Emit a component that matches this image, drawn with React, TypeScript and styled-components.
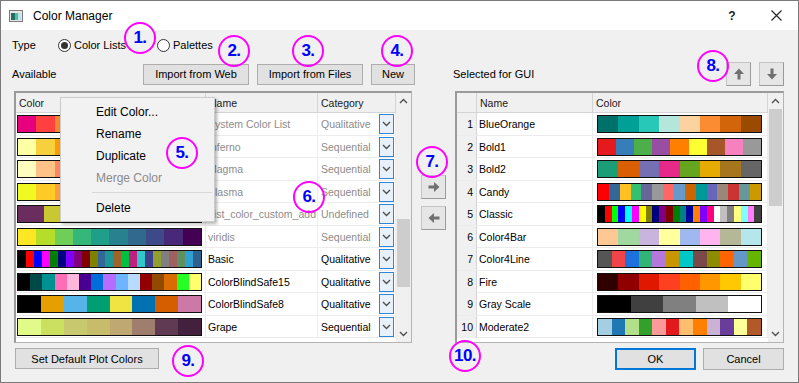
import React from 'react';
import styled, { createGlobalStyle } from 'styled-components';

const GlobalStyle = createGlobalStyle`
  html, body { margin: 0; padding: 0; background: #ffffff; }
  body {
    font-family: "Liberation Sans", Arial, sans-serif;
    font-size: 11px;
    color: #000;
  }
  * { box-sizing: border-box; }
`;

const available = [
  { name: 'System Color List', cat: 'Qualitative', sys: true, colors: ['#e6007e', '#ff4040', '#f08a2c', '#f5c400', '#8cc63f', '#00a651', '#00aeef', '#2e3192', '#662d91', '#9e005d'] },
  { name: 'Inferno', cat: 'Sequential', sys: true, colors: ['#fcffa4', '#f7d13d', '#fb9b06', '#ed6925', '#cf4446', '#a52c60', '#781c6d', '#4a0c6b', '#1b0c41', '#000004'] },
  { name: 'Magma', cat: 'Sequential', sys: true, colors: ['#fcfdbf', '#fec287', '#fb8761', '#e55064', '#b73779', '#8c2981', '#5f187f', '#311165', '#0b0924', '#000004'] },
  { name: 'Plasma', cat: 'Sequential', sys: true, colors: ['#f0f921', '#fdca26', '#fb9f3a', '#ed7953', '#d8576b', '#bd3786', '#9c179e', '#7201a8', '#46039f', '#0d0887'] },
  { name: 'List_color_custom_add', cat: 'Undefined', sys: true, colors: ['#6b2c5e', '#c9c832', '#1e8a3c', '#0a1e8c', '#000080', '#1e5aa0', '#00e682'] },
  { name: 'viridis', cat: 'Sequential', sys: true, colors: ['#fde725', '#b5de2b', '#6ece58', '#35b779', '#1f9e89', '#26828e', '#31688e', '#3e4989', '#482878', '#440154'] },
  { name: 'Basic', cat: 'Qualitative', sys: false, colors: ['#000000', '#ff0000', '#0000ff', '#ff00ff', '#008000', '#000080', '#8000ff', '#800080', '#800000', '#808000', '#336699', '#1e9696', '#a0642a', '#00c040', '#c02080', '#30c8c8', '#404090', '#90a030', '#808080', '#a06060', '#609060', '#30a0d0', '#306090'] },
  { name: 'ColorBlindSafe15', cat: 'Qualitative', sys: false, colors: ['#000000', '#004949', '#009292', '#ff6db6', '#ffb6db', '#490092', '#006ddb', '#b66dff', '#6db6ff', '#b6dbff', '#920000', '#924900', '#db6d00', '#24ff24', '#ffff6d'] },
  { name: 'ColorBlindSafe8', cat: 'Qualitative', sys: false, colors: ['#000000', '#e69f00', '#56b4e9', '#009e73', '#f0e442', '#0072b2', '#d55e00', '#cc79a7'] },
  { name: 'Grape', cat: 'Sequential', sys: false, colors: ['#e2fa8a', '#cce060', '#c8c870', '#c6bc6a', '#c0a872', '#a07e6e', '#603a52', '#42203e'] },
];

const selected = [
  { name: 'BlueOrange', colors: ['#00706a', '#00a096', '#28c8b8', '#b4e6dc', '#fcd2a0', '#fc8c32', '#d2640a', '#9b4b00'] },
  { name: 'Bold1', colors: ['#e41a1c', '#377eb8', '#4daf4a', '#984ea3', '#ff7f00', '#ffff33', '#a65628', '#f781bf', '#999999'] },
  { name: 'Bold2', colors: ['#1b9e77', '#d95f02', '#7570b3', '#e7298a', '#66a61e', '#e6ab02', '#a6761d', '#666666'] },
  { name: 'Candy', colors: ['#ff0000', '#336699', '#ffc020', '#33c070', '#666699', '#999999', '#ff6666', '#6699cc', '#cc6600', '#009999', '#6666bb', '#998877', '#cc3333', '#669999', '#cc9900'] },
  { name: 'Classic', colors: ['#000000', '#ff0000', '#00ff00', '#0000ff', '#00ffff', '#ff00ff', '#ffff00', '#808000', '#000080', '#800080', '#800000', '#008000', '#008080', '#0000a0', '#ff8000', '#8000ff', '#ff0080', '#ffffff', '#c0c0c0', '#808080', '#ffff80', '#80ffff', '#ff80ff', '#404040'] },
  { name: 'Color4Bar', colors: ['#fdc893', '#a0d8a0', '#c8b4dc', '#ffff9e', '#a0b8f0', '#ffb4f0', '#b4b896', '#b4e6ec'] },
  { name: 'Color4Line', colors: ['#555555', '#f04448', '#1e70dc', '#32b478', '#b478dc', '#c89600', '#00c8c8', '#7a4a4a', '#8c8c00', '#ff6400', '#6496c8', '#64b400'] },
  { name: 'Fire', colors: ['#300000', '#900000', '#e01800', '#ff4020', '#ff6000', '#ff9800', '#ffc800', '#ffff6e'] },
  { name: 'Gray Scale', colors: ['#000000', '#404040', '#808080', '#c0c0c0', '#ffffff'] },
  { name: 'Moderate2', colors: ['#a6cee3', '#1f78b4', '#b2df8a', '#33a02c', '#fb9a99', '#e31a1c', '#fdbf6f', '#ff7f00', '#cab2d6', '#6a3d9a', '#ffff99', '#b15928'] },
];

const marks = [
  { n: '1.', x: 140, y: 38 },
  { n: '2.', x: 234, y: 51 },
  { n: '3.', x: 308, y: 51 },
  { n: '4.', x: 397, y: 51 },
  { n: '5.', x: 182, y: 153 },
  { n: '6.', x: 309, y: 197 },
  { n: '7.', x: 432, y: 162 },
  { n: '8.', x: 713, y: 66 },
  { n: '9.', x: 188, y: 361 },
  { n: '10.', x: 465, y: 356 },
];

const Chevron = ({ up }: { up?: boolean }) => (
  <svg width="9" height="6" viewBox="0 0 9 6">
    <polyline
      points={up ? '1,5 4.5,1.5 8,5' : '1,1 4.5,4.5 8,1'}
      fill="none"
      stroke="#505050"
      strokeWidth="1.4"
    />
  </svg>
);

const Arrow = ({ dir }: { dir: 'up' | 'down' | 'left' | 'right' }) => {
  const rot = { up: 0, right: 90, down: 180, left: 270 }[dir];
  return (
    <svg width="14" height="14" viewBox="0 0 14 14">
      <path d="M7 1.5 L2 7 H5.5 V12.5 H8.5 V7 H12 Z" fill="#707070" transform={`rotate(${rot} 7 7)`} />
    </svg>
  );
};

const App = () => {
  return (
    <>
      <GlobalStyle />
      <Window>
        <TitleBar>
          <svg width="14" height="12" viewBox="0 0 14 12">
            <rect x="0.5" y="0.5" width="13" height="11" fill="#e6e6e6" stroke="#7a7a7a" />
            <rect x="2" y="3" width="4" height="7" fill="#1f6f5f" />
            <rect x="6" y="3" width="3" height="7" fill="#5fb8a0" />
            <rect x="9" y="3" width="3" height="7" fill="#bfe0f0" />
          </svg>
          <TitleText>Color Manager</TitleText>
          <TitleButton>
            <b>?</b>
          </TitleButton>
          <TitleButton>
            <svg width="11" height="11" viewBox="0 0 11 11">
              <path d="M0.5 0.5 L10.5 10.5 M10.5 0.5 L0.5 10.5" stroke="#222" strokeWidth="1.1" />
            </svg>
          </TitleButton>
        </TitleBar>

        <Body>
          <TypeRow>
            <Label $w={46}>Type</Label>
            <RadioItem $w={99}>
              <RadioDot $on />
              Color Lists
            </RadioItem>
            <RadioItem>
              <RadioDot />
              Palettes
            </RadioItem>
          </TypeRow>

          <ToolRow>
            <Tools>
              <Label $w={123}>Available</Label>
              <Button $w={106}>Import from Web</Button>
              <Button $w={106}>Import from Files</Button>
              <Button $w={44}>New</Button>
            </Tools>
            <span />
            <Tools>
              <Label $w={0} style={{ flex: 1 }}>Selected for GUI</Label>
              <IconButton>
                <Arrow dir="up" />
              </IconButton>
              <IconButton>
                <Arrow dir="down" />
              </IconButton>
            </Tools>
          </ToolRow>

          <Main>
            <Frame>
              <Grid>
                <AvailRow $head>
                  <HeadCell>Color</HeadCell>
                  <HeadCell>Name</HeadCell>
                  <HeadCell>Category</HeadCell>
                </AvailRow>
                {available.map((row) => (
                  <AvailRow key={row.name}>
                    <SwatchCell>
                      <Swatch>
                        {row.colors.map((c, i) => (
                          <Chip key={i} $c={c} />
                        ))}
                      </Swatch>
                    </SwatchCell>
                    <TextCell $muted={row.sys}>{row.name}</TextCell>
                    <CatCell $muted={row.sys}>
                      {row.cat}
                      <Drop>
                        <Chevron />
                      </Drop>
                    </CatCell>
                  </AvailRow>
                ))}
              </Grid>
              <Scrollbar>
                <ScrollArrow>
                  <Chevron up />
                </ScrollArrow>
                <Track>
                  <Thumb $top={110} $h={68} />
                </Track>
                <ScrollArrow>
                  <Chevron />
                </ScrollArrow>
              </Scrollbar>
            </Frame>

            <Middle>
              <IconButton>
                <Arrow dir="right" />
              </IconButton>
              <IconButton>
                <Arrow dir="left" />
              </IconButton>
            </Middle>

            <Frame>
              <Grid>
                <SelRow $head>
                  <NumCell />
                  <HeadCell>Name</HeadCell>
                  <HeadCell>Color</HeadCell>
                </SelRow>
                {selected.map((row, idx) => (
                  <SelRow key={row.name}>
                    <NumCell>{idx + 1}</NumCell>
                    <TextCell>{row.name}</TextCell>
                    <SwatchCell $right>
                      <Swatch>
                        {row.colors.map((c, i) => (
                          <Chip key={i} $c={c} />
                        ))}
                      </Swatch>
                    </SwatchCell>
                  </SelRow>
                ))}
              </Grid>
              <Scrollbar>
                <ScrollArrow>
                  <Chevron up />
                </ScrollArrow>
                <Track>
                  <Thumb $top={0} $h={97} />
                </Track>
                <ScrollArrow>
                  <Chevron />
                </ScrollArrow>
              </Scrollbar>
            </Frame>
          </Main>

          <BottomRow>
            <Button $w={144}>Set Default Plot Colors</Button>
            <DialogButtons>
              <Button $w={81} $h={22} $focus>
                OK
              </Button>
              <Button $w={81} $h={22}>
                Cancel
              </Button>
            </DialogButtons>
          </BottomRow>
        </Body>

        <Menu>
          <MenuItem>Edit Color...</MenuItem>
          <MenuItem>Rename</MenuItem>
          <MenuItem>Duplicate</MenuItem>
          <MenuItem $disabled>Merge Color</MenuItem>
          <MenuSeparator />
          <MenuItem>Delete</MenuItem>
        </Menu>

        {marks.map((m) => (
          <Mark key={m.n} $x={m.x} $y={m.y}>
            {m.n}
          </Mark>
        ))}
      </Window>
    </>
  );
};

const Window = styled.div`
  position: relative;
  width: 799px;
  height: 383px;
  border: 1px solid #7a7a7a;
  background: #f0f0f0;
  display: flex;
  flex-direction: column;
  overflow: hidden;
`;

const TitleBar = styled.div`
  height: 29px;
  background: #ffffff;
  display: flex;
  align-items: center;
  padding-left: 8px;
`;

const TitleText = styled.span`
  margin-left: 10px;
  font-size: 12px;
  flex: 1;
`;

const TitleButton = styled.div`
  width: 44px;
  height: 29px;
  display: flex;
  align-items: center;
  justify-content: center;
  font-size: 12px;
  color: #222;
`;

const Body = styled.div`
  flex: 1;
  display: flex;
  flex-direction: column;
  padding: 0 14px 0 13px;
`;

const TypeRow = styled.div`
  margin-top: 6px;
  height: 18px;
  display: flex;
  align-items: center;
`;

const Label = styled.span<{ $w: number }>`
  margin-left: -2px;
  width: ${(p) => (p.$w ? `${p.$w}px` : 'auto')};
  flex-shrink: 0;
`;

const RadioItem = styled.label<{ $w?: number }>`
  display: flex;
  align-items: center;
  gap: 3px;
  width: ${(p) => (p.$w ? `${p.$w}px` : 'auto')};
`;

const RadioDot = styled.span<{ $on?: boolean }>`
  width: 13px;
  height: 13px;
  border-radius: 50%;
  border: 1px solid #333;
  background: #fff;
  display: flex;
  align-items: center;
  justify-content: center;

  &::after {
    content: '';
    width: 7px;
    height: 7px;
    border-radius: 50%;
    background: ${(p) => (p.$on ? '#333' : 'transparent')};
  }
`;

const ToolRow = styled.div`
  margin-top: 8px;
  height: 24px;
  display: grid;
  grid-template-columns: 398px 43px 1fr;
  align-items: center;
`;

const Tools = styled.div`
  display: flex;
  align-items: center;
  gap: 8px;
`;

const Button = styled.div<{ $w: number; $h?: number; $focus?: boolean }>`
  width: ${(p) => p.$w}px;
  height: ${(p) => p.$h ?? 21}px;
  flex-shrink: 0;
  background: #e1e1e1;
  border: ${(p) => (p.$focus ? '2px solid #0078d7' : '1px solid #adadad')};
  display: flex;
  align-items: center;
  justify-content: center;
  white-space: nowrap;
`;

const IconButton = styled.div`
  width: 25px;
  height: 24px;
  background: #e6e6e6;
  border: 1px solid #c4c4c4;
  border-right-color: #9a9a9a;
  border-bottom-color: #9a9a9a;
  display: flex;
  align-items: center;
  justify-content: center;
`;

const Main = styled.div`
  margin-top: 5px;
  height: 252px;
  display: grid;
  grid-template-columns: 398px 43px 1fr;
`;

const Frame = styled.div`
  display: flex;
  background: #ffffff;
  border-top: 2px solid #9a9a9a;
  border-left: 2px solid #9a9a9a;
  border-right: 1px solid #b4b4b4;
  border-bottom: 1px solid #b4b4b4;
  overflow: hidden;
`;

const Grid = styled.div`
  flex: 1;
  display: flex;
  flex-direction: column;
  font-size: 10.5px;
`;

const AvailRow = styled.div<{ $head?: boolean }>`
  display: grid;
  grid-template-columns: 190px 112px 78px;
  height: ${(p) => (p.$head ? '20px' : '22.5px')};
  flex-shrink: 0;
  background: ${(p) => (p.$head ? '#f0f0f0' : '#ffffff')};
  border-bottom: 1px solid ${(p) => (p.$head ? '#d4d4d4' : '#ececec')};
`;

const SelRow = styled(AvailRow)`
  grid-template-columns: 20px 116px 175px;
`;

const HeadCell = styled.div`
  display: flex;
  align-items: center;
  padding-left: 3px;
  border-right: 1px solid #d4d4d4;
  color: #1a1a1a;
`;

const TextCell = styled.div<{ $muted?: boolean }>`
  display: flex;
  align-items: center;
  padding-left: 2px;
  white-space: nowrap;
  overflow: hidden;
  border-right: 1px solid #ececec;
  color: ${(p) => (p.$muted ? '#8c8c8c' : '#000')};
`;

const CatCell = styled(TextCell)`
  justify-content: space-between;
  padding-left: 3px;
  padding-right: 1px;
`;

const Drop = styled.div`
  width: 15px;
  height: 20px;
  border: 1px solid #2f86d6;
  background: #e8f1fa;
  display: flex;
  align-items: center;
  justify-content: center;
`;

const NumCell = styled.div`
  display: flex;
  align-items: center;
  justify-content: flex-end;
  padding-right: 3px;
  background: #f0f0f0;
  border-right: 1px solid #d4d4d4;
`;

const SwatchCell = styled.div<{ $right?: boolean }>`
  padding: ${(p) => (p.$right ? '2px 5px 2px 4px' : '2px 3px 2px 1px')};
  border-right: 1px solid #ececec;
`;

const Swatch = styled.div`
  height: 18px;
  display: flex;
  border: 1px solid #111;
`;

const Chip = styled.span<{ $c: string }>`
  flex: 1;
  background: ${(p) => p.$c};
`;

const Scrollbar = styled.div`
  width: 15px;
  flex-shrink: 0;
  background: #f0f0f0;
  display: flex;
  flex-direction: column;
`;

const ScrollArrow = styled.div`
  height: 16px;
  display: flex;
  align-items: center;
  justify-content: center;
`;

const Track = styled.div`
  flex: 1;
  display: flex;
  flex-direction: column;
  align-items: center;
`;

const Thumb = styled.div<{ $top: number; $h: number }>`
  margin-top: ${(p) => p.$top}px;
  width: 13px;
  height: ${(p) => p.$h}px;
  background: #cdcdcd;
`;

const Middle = styled.div`
  display: flex;
  flex-direction: column;
  align-items: center;
  padding-top: 84px;
  gap: 7px;
`;

const BottomRow = styled.div`
  margin-top: 4px;
  height: 23px;
  display: flex;
  align-items: center;
  justify-content: space-between;
  padding-left: 1px;
`;

const DialogButtons = styled.div`
  display: flex;
  gap: 7px;
`;

const Menu = styled.div`
  position: absolute;
  left: 59px;
  top: 96px;
  width: 155px;
  padding: 3px 0 2px;
  background: #f2f2f2;
  border: 1px solid #cccccc;
  box-shadow: 2px 2px 3px rgba(0, 0, 0, 0.3);
  font-size: 12px;
`;

const MenuItem = styled.div<{ $disabled?: boolean }>`
  height: 22px;
  display: flex;
  align-items: center;
  padding-left: 35px;
  color: ${(p) => (p.$disabled ? '#8a8a8a' : '#000')};
`;

const MenuSeparator = styled.div`
  height: 1px;
  margin: 3px 2px 4px 31px;
  background: #d7d7d7;
`;

const Mark = styled.div<{ $x: number; $y: number }>`
  position: absolute;
  left: ${(p) => p.$x - 17}px;
  top: ${(p) => p.$y - 17}px;
  width: 32px;
  height: 32px;
  border-radius: 50%;
  border: 2px solid #ff00ff;
  display: flex;
  align-items: center;
  justify-content: center;
  color: #0000ff;
  font-family: "Liberation Sans", Arial, sans-serif;
  font-weight: bold;
  font-size: 17px;
  letter-spacing: -0.5px;
`;

export default App;
